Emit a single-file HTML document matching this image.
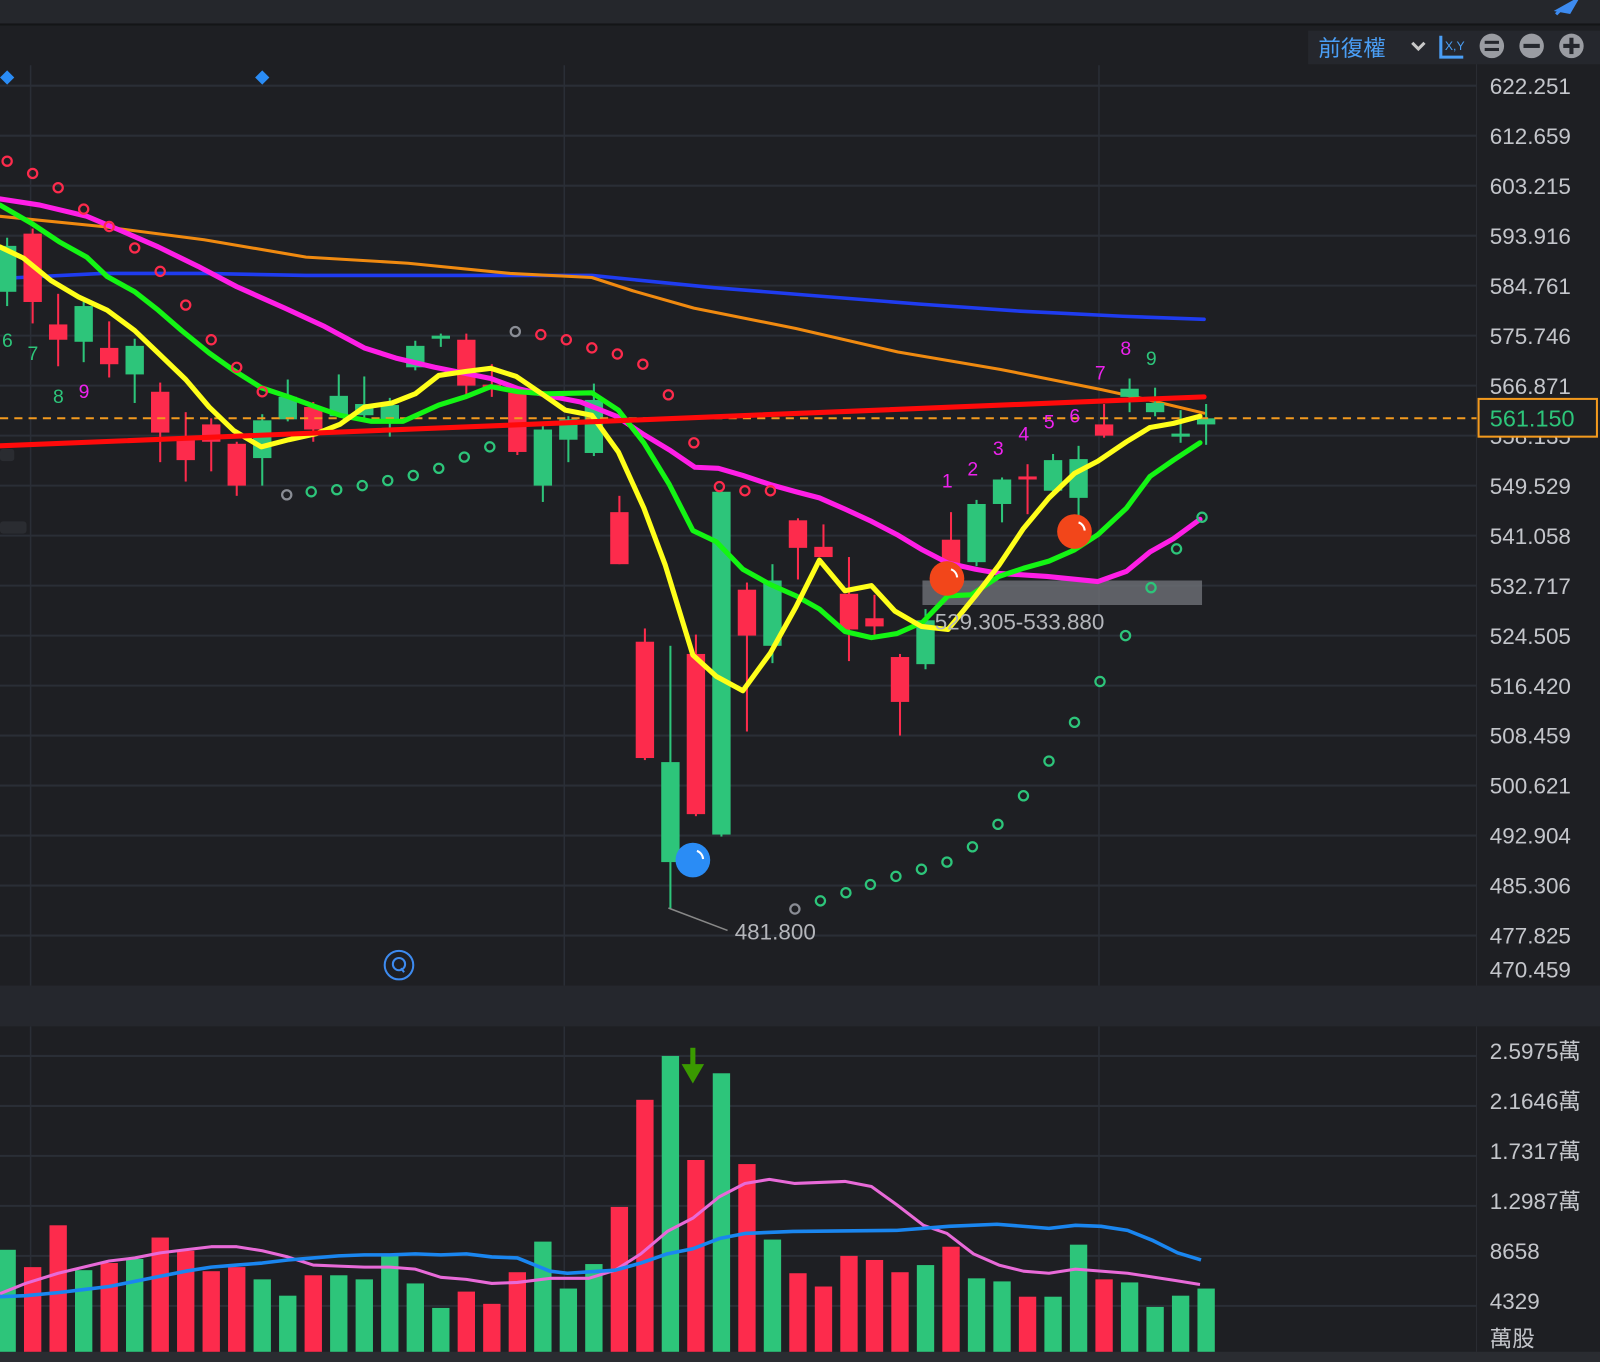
<!DOCTYPE html>
<html><head><meta charset="utf-8"><style>
html,body{margin:0;padding:0;background:#1e1f23;width:1600px;height:1362px;overflow:hidden}
svg{display:block}
text{font-family:"Liberation Sans","Noto Sans CJK TC",sans-serif}
</style></head><body>
<svg id="s" width="1600" height="1362" viewBox="0 0 1568 1335" preserveAspectRatio="none" xmlns="http://www.w3.org/2000/svg">
<rect x="0" y="0" width="1568" height="1335" fill="#1e1f23"/>
<rect x="0" y="0" width="1568" height="23" fill="#25272c"/>
<rect x="0" y="23" width="1568" height="2" fill="#141517"/>
<path d="M1527 10 L1545 0 L1538 12 Z M1531 8 L1525 14" stroke="#3d8bf0" stroke-width="3" fill="#3d8bf0"/>
<rect x="0" y="966" width="1568" height="40" fill="#25272d"/>
<rect x="0" y="1325" width="1568" height="10" fill="#2a2c31"/>
<line x1="1447" y1="62" x2="1447" y2="966" stroke="#2a2d33" stroke-width="1"/>
<line x1="1447" y1="1006" x2="1447" y2="1325" stroke="#2a2d33" stroke-width="1"/>
<g id="grid" stroke="#2a2e36" stroke-width="2"></g>
<g id="lines" fill="none" stroke-linejoin="round" stroke-linecap="round"></g>
<rect x="904" y="569" width="274" height="24" fill="#6a6c72" opacity="0.85"/>
<g id="candles"></g>
<line x1="0" y1="410" x2="1447" y2="410" stroke="#f39a1e" stroke-width="2" stroke-dasharray="8,6"/>
<g id="lines2" fill="none" stroke-linejoin="round" stroke-linecap="round"></g>
<g id="dots" fill="none" stroke-width="2.2"></g>
<g id="vol"></g>
<g id="vlines" fill="none" stroke-linejoin="round"></g>
<path d="M7 69 L14 76 L7 83 L0 76 Z M257 69 L264 76 L257 83 L250 76 Z" fill="#2a8cf5"/>
<circle cx="679" cy="843" r="17" fill="#2a8cf5"/>
<path d="M683 834 A9 9 0 0 1 689 842" stroke="#fff" stroke-width="2" fill="none"/>
<circle cx="928" cy="567" r="17" fill="#f2461a"/>
<path d="M932 558 A9 9 0 0 1 938 566" stroke="#fff" stroke-width="2" fill="none"/>
<circle cx="1053" cy="521" r="17" fill="#f2461a"/>
<path d="M1057 512 A9 9 0 0 1 1063 520" stroke="#fff" stroke-width="2" fill="none"/>
<text x="916" y="617" font-size="22" fill="#b4b6bb">529.305-533.880</text>
<line x1="655" y1="890" x2="713" y2="912" stroke="#888" stroke-width="1.5"/>
<text x="720" y="921" font-size="22" fill="#b4b6bb">481.800</text>
<circle cx="391" cy="946" r="14" stroke="#3d8bf0" stroke-width="2" fill="none"/>
<circle cx="391" cy="945" r="6" stroke="#3d8bf0" stroke-width="2" fill="none"/>
<line x1="393" y1="949" x2="396" y2="953" stroke="#3d8bf0" stroke-width="2"/>
<g font-size="19">
<text x="2" y="340" fill="#2dc57a">6</text>
<text x="27" y="353" fill="#2dc57a">7</text>
<text x="52" y="395" fill="#2dc57a">8</text>
<text x="77" y="390" fill="#ee22ee">9</text>
<text x="923" y="478" fill="#ee22ee">1</text>
<text x="948" y="466" fill="#ee22ee">2</text>
<text x="973" y="446" fill="#ee22ee">3</text>
<text x="998" y="432" fill="#ee22ee">4</text>
<text x="1023" y="420" fill="#ee22ee">5</text>
<text x="1048" y="414" fill="#ee22ee">6</text>
<text x="1073" y="372" fill="#ee22ee">7</text>
<text x="1098" y="348" fill="#ee22ee">8</text>
<text x="1123" y="358" fill="#2dc57a">9</text>
</g>
<path d="M679 1027 L679 1048" stroke="#3a9a00" stroke-width="5"/>
<path d="M668 1043 L690 1043 L679 1062 Z" fill="#3a9a00"/>
<rect x="1282" y="30" width="286" height="33" fill="#25272d"/>
<text x="1292" y="55" font-size="22" fill="#4a9ef5">前復權</text>
<path d="M1384 42 L1390 48 L1396 42" stroke="#c8c8c8" stroke-width="3" fill="none"/>
<path d="M1412 35 L1412 56 L1434 56" stroke="#4a9ef5" stroke-width="3" fill="none"/>
<text x="1416" y="49" font-size="12" fill="#4a9ef5">X,Y</text>
<circle cx="1462" cy="45" r="12" fill="#9a9ca2"/><rect x="1455" y="40" width="14" height="3" fill="#25272d"/><rect x="1455" y="47" width="14" height="3" fill="#25272d"/>
<circle cx="1501" cy="45" r="12" fill="#9a9ca2"/><rect x="1493" y="43" width="16" height="4" fill="#25272d"/>
<circle cx="1540" cy="45" r="12" fill="#9a9ca2"/><rect x="1532" y="43" width="16" height="4" fill="#25272d"/><rect x="1538" y="37" width="4" height="16" fill="#25272d"/>
<g font-size="22" fill="#c4c6cb">
<text x="1460" y="92">622.251</text>
<text x="1460" y="141">612.659</text>
<text x="1460" y="190">603.215</text>
<text x="1460" y="239">593.916</text>
<text x="1460" y="288">584.761</text>
<text x="1460" y="337">575.746</text>
<text x="1460" y="386">566.871</text>
<text x="1460" y="435">558.135</text>
<text x="1460" y="484">549.529</text>
<text x="1460" y="533">541.058</text>
<text x="1460" y="582">532.717</text>
<text x="1460" y="631">524.505</text>
<text x="1460" y="680">516.420</text>
<text x="1460" y="729">508.459</text>
<text x="1460" y="778">500.621</text>
<text x="1460" y="827">492.904</text>
<text x="1460" y="876">485.306</text>
<text x="1460" y="925">477.825</text>
<text x="1460" y="958">470.459</text>
<text x="1460" y="1038">2.5975萬</text>
<text x="1460" y="1087">2.1646萬</text>
<text x="1460" y="1136">1.7317萬</text>
<text x="1460" y="1185">1.2987萬</text>
<text x="1460" y="1234">8658</text>
<text x="1460" y="1283">4329</text>
<text x="1460" y="1320">萬股</text>
</g>
<rect x="1449" y="391" width="116" height="37" fill="#1e1f23" stroke="#f39a1e" stroke-width="2"/>
<text x="1460" y="418" font-size="23" fill="#2dc57a">561.150</text>
<rect x="0" y="440" width="14" height="12" rx="3" fill="#2a2c31"/>
<rect x="0" y="511" width="26" height="12" rx="3" fill="#2a2c31"/>
</svg>
<script>
var NS="http://www.w3.org/2000/svg";
function el(p,t,a){var e=document.createElementNS(NS,t);for(var k in a)e.setAttribute(k,a[k]);document.getElementById(p).appendChild(e);return e;}
var R="#fd2b4c",G="#2dc57a";
[84,133,182,231,280,329,378,427,476,525,574,623,672,721,770,819,868,917].forEach(function(y){el("grid","line",{x1:0,y1:y,x2:1447,y2:y});});
[1035,1084,1133,1182,1231,1280].forEach(function(y){el("grid","line",{x1:0,y1:y,x2:1447,y2:y});});
[30,553,1077].forEach(function(x){el("grid","line",{x1:x,y1:64,x2:x,y2:966,"stroke-width":1.5});el("grid","line",{x1:x,y1:1006,x2:x,y2:1325,"stroke-width":1.5});});
function pl(g,pts,c,w){el(g,"polyline",{points:pts.map(function(p){return p.join(",")}).join(" "),stroke:c,"stroke-width":w});}
pl("lines",[[0,273],[100,268],[200,268],[300,270],[400,270],[500,270],[580,270],[700,282],[800,290],[900,298],[1000,305],[1100,310],[1180,313]],"#1f3cf0",3.5);
pl("lines",[[0,212],[100,222],[200,235],[300,252],[400,258],[500,268],[580,272],[620,285],[680,302],[780,322],[880,345],[980,362],[1080,382],[1130,393],[1180,405]],"#f08a10",3);
var C=[["G",241,286,233,300],["R",229,296,224,317],["R",318,333,288,359],["G",300,335,296,355],["R",341,357,315,370],["G",339,367,332,395],["R",384,424,375,453],["R",431,451,404,472],["R",416,433,410,462],["R",435,476,433,486],["G",412,449,406,476],["G",389,411,372,413],["R",399,421,394,433],["G",388,408,367,408],["G",396,407,369,409],["G",397,412,390,428],["G",339,360,334,363],["G",329,331,327,340],["R",333,378,327,389],["R",377,381,357,389],["R",385,443,380,446],["G",421,476,414,492],["G",411,431,408,453],["G",392,444,376,447],["R",502,553,486,553],["R",629,743,616,745],["G",747,845,633,891],["R",641,798,622,800],["G",482,818,480,820],["R",578,623,571,717],["G",569,633,553,650],["R",510,537,508,568],["R",536,546,514,546],["R",582,617,546,648],["R",606,614,583,622],["R",644,688,641,721],["G",608,651,597,656],["R",529,554,502,554],["G",494,551,490,555],["G",470,494,468,512],["R",467,469,455,504],["G",451,481,445,482],["G",450,488,437,505],["R",416,427,396,429],["G",381,389,371,404],["G",395,404,380,408],["G",425,427,402,434],["G",410,416,396,436]];
C.forEach(function(c,i){var x=7+25*i,col=c[0]=="R"?R:G;
 el("candles","rect",{x:x-1,y:c[3],width:2,height:c[4]-c[3],fill:col});
 if(c[2]-c[1]<4){el("candles","rect",{x:x-9,y:c[1],width:18,height:3,fill:col});}
 else el("candles","rect",{x:x-9,y:c[1],width:18,height:c[2]-c[1],fill:col});});
pl("lines2",[[0,195],[39,201],[85,212],[116,225],[155,242],[194,261],[232,281],[279,302],[318,320],[357,341],[388,351],[426,360],[481,371],[508,381],[543,389],[569,394],[604,408],[631,426],[656,441],[681,458],[704,459],[728,466],[755,475],[780,482],[803,488],[828,499],[854,511],[879,524],[904,539],[929,552],[956,558],[979,562],[1026,565],[1076,570],[1104,560],[1127,541],[1150,528],[1176,509]],"#ff1ee6",5);
pl("lines2",[[0,201],[31,219],[58,237],[85,252],[105,271],[132,286],[155,304],[178,324],[205,346],[229,363],[256,380],[283,389],[310,399],[333,407],[364,413],[395,413],[430,397],[456,389],[481,379],[508,384],[535,386],[580,385],[606,402],[631,434],[656,475],[679,520],[702,531],[728,558],[755,573],[780,584],[803,597],[828,619],[854,625],[879,621],[904,610],[929,584],[952,583],[979,565],[1003,557],[1028,550],[1053,539],[1076,524],[1104,498],[1127,467],[1150,451],[1176,434]],"#14f514",5);
pl("lines2",[[0,242],[23,253],[50,275],[77,291],[105,304],[132,324],[155,346],[182,372],[205,399],[229,422],[256,438],[283,431],[310,425],[333,416],[357,399],[384,395],[407,386],[430,368],[457,364],[481,361],[506,369],[531,386],[554,402],[580,407],[606,443],[631,498],[652,554],[679,642],[702,663],[728,677],[755,640],[780,595],[803,549],[828,579],[854,574],[877,599],[903,614],[929,617],[956,584],[979,554],[1003,518],[1028,488],[1053,464],[1076,452],[1104,433],[1127,419],[1150,415],[1176,408]],"#ffff1a",5);
pl("lines2",[[0,437],[1180,389]],"#ff0a0a",5);
var D=[[7,158,R],[32,170,R],[57,184,R],[82,205,R],[107,222,R],[132,243,R],[157,266,R],[182,299,R],[207,333,R],[232,360,R],[257,384,R],[281,485,"#8a8d95"],[305,482,G],[330,480,G],[355,476,G],[380,471,G],[405,466,G],[430,459,G],[455,448,G],[480,438,G],[505,325,"#8a8d95"],[530,328,R],[555,333,R],[580,341,R],[605,347,R],[630,357,R],[655,387,R],[680,434,R],[705,477,R],[730,481,R],[755,481,R],[779,891,"#8a8d95"],[804,883,G],[829,875,G],[853,867,G],[878,859,G],[903,852,G],[928,845,G],[953,830,G],[978,808,G],[1003,780,G],[1028,746,G],[1053,708,G],[1078,668,G],[1103,623,G],[1128,576,G],[1153,538,G],[1178,507,G]];
D.forEach(function(d){el("dots","circle",{cx:d[0],cy:d[1],r:4.5,stroke:d[2]});});
var V="G1225 R1242 R1201 G1245 R1238 G1234 R1213 R1226 R1246 R1242 G1254 G1270 R1250 G1250 G1254 G1231 G1258 G1282 R1266 R1278 R1247 G1217 G1263 G1239 R1183 R1078 G1035 R1137 G1052 R1141 G1215 R1248 R1261 R1231 R1235 R1247 G1240 R1222 G1253 G1256 R1271 G1271 G1220 R1254 G1257 G1281 G1270 G1263".split(" ");
V.forEach(function(v,i){var x=7+25*i,y=+v.slice(1);el("vol","rect",{x:x-8.5,y:y,width:17,height:1325-y,fill:v[0]=="R"?R:G});});
pl("vlines",[[0,1268],[25,1258],[57,1248],[82,1242],[107,1236],[132,1233],[157,1228],[182,1225],[207,1222],[232,1222],[257,1226],[282,1232],[307,1240],[332,1241],[357,1242],[382,1242],[407,1244],[432,1252],[457,1254],[482,1258],[507,1257],[539,1253],[577,1253],[603,1245],[628,1229],[654,1207],[679,1194],[705,1173],[730,1160],[754,1156],[779,1160],[828,1158],[854,1163],[879,1181],[905,1201],[928,1209],[954,1229],[979,1240],[1003,1246],[1028,1248],[1054,1244],[1105,1248],[1151,1255],[1176,1259]],"#e86ad8",3);
pl("vlines",[[0,1271],[25,1270],[57,1267],[82,1264],[107,1261],[132,1256],[157,1251],[182,1246],[207,1242],[232,1240],[257,1238],[282,1235],[307,1233],[332,1231],[357,1230],[382,1230],[407,1229],[432,1230],[457,1229],[482,1232],[507,1233],[539,1246],[556,1248],[603,1245],[628,1238],[654,1229],[679,1224],[705,1214],[730,1209],[777,1207],[879,1206],[930,1202],[977,1200],[1028,1204],[1054,1201],[1079,1202],[1105,1206],[1130,1216],[1154,1228],[1177,1235]],"#1a86f0",3.5);
</script>
</body></html>
